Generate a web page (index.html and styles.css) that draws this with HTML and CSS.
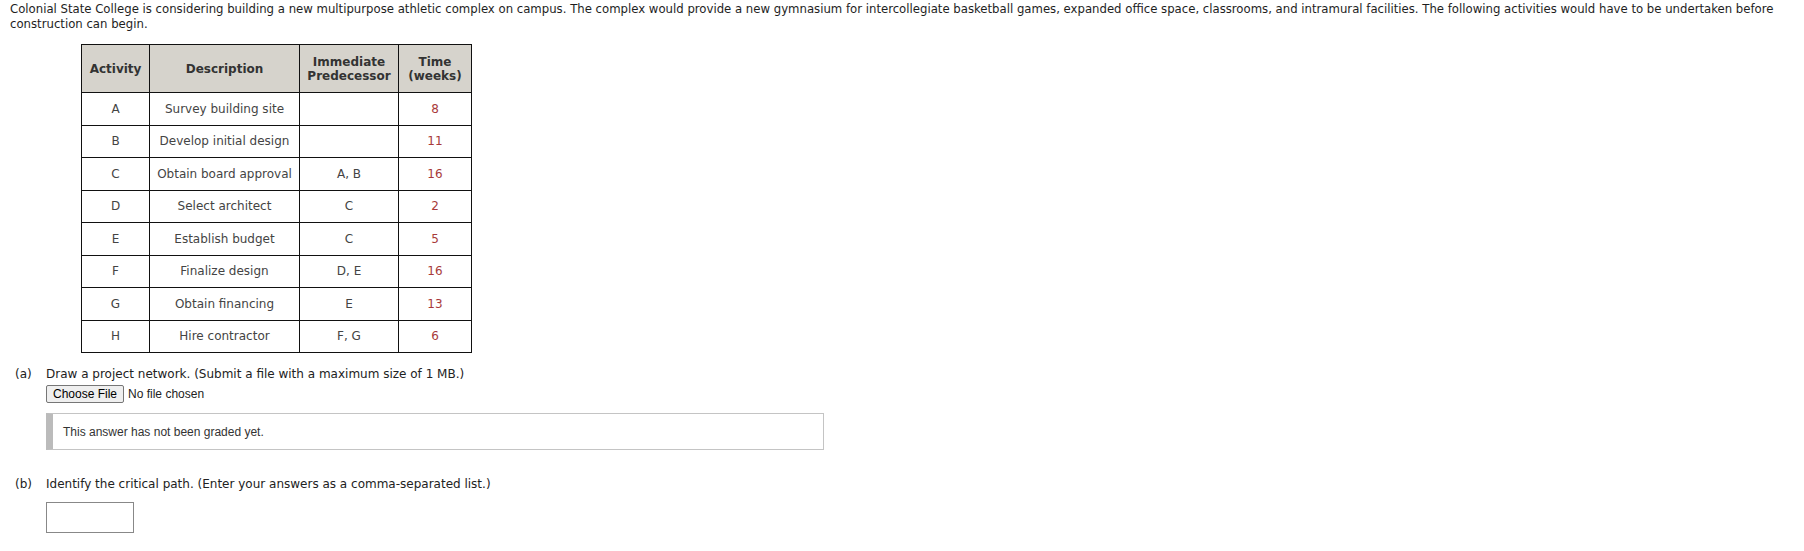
FILE: index.html
```html
<!DOCTYPE html>
<html lang="en">
<head>
    <meta charset="UTF-8">
    <title>Critical Path Question</title>
    <link rel="stylesheet" href="styles.css">
</head>
<body>
    <p class="intro">Colonial State College is considering building a new multipurpose athletic complex on campus. The complex would provide a new gymnasium for intercollegiate basketball games, expanded office space, classrooms, and intramural facilities. The following activities would have to be undertaken before construction can begin.</p>

    <!-- Activity table -->
    <table class="activities">
        <tr>
            <th class="col-act">Activity</th>
            <th class="col-desc">Description</th>
            <th class="col-pred">Immediate<br>Predecessor</th>
            <th class="col-time">Time<br>(weeks)</th>
        </tr>
        <tr><td>A</td><td>Survey building site</td><td></td><td class="time">8</td></tr>
        <tr><td>B</td><td>Develop initial design</td><td></td><td class="time">11</td></tr>
        <tr><td>C</td><td>Obtain board approval</td><td>A, B</td><td class="time">16</td></tr>
        <tr><td>D</td><td>Select architect</td><td>C</td><td class="time">2</td></tr>
        <tr><td>E</td><td>Establish budget</td><td>C</td><td class="time">5</td></tr>
        <tr><td>F</td><td>Finalize design</td><td>D, E</td><td class="time">16</td></tr>
        <tr><td>G</td><td>Obtain financing</td><td>E</td><td class="time">13</td></tr>
        <tr><td>H</td><td>Hire contractor</td><td>F, G</td><td class="time">6</td></tr>
    </table>

    <!-- Part (a) -->
    <div class="part part-a">
        <span class="part-label">(a)</span>
        <div class="part-body">
            <p class="question">Draw a project network. (Submit a file with a maximum size of 1 MB.)</p>
            <div class="file-row">
                <button type="button" class="file-btn">Choose File</button>
                <span class="file-name">No file chosen</span>
            </div>
            <div class="graded">This answer has not been graded yet.</div>
        </div>
    </div>

    <!-- Part (b) -->
    <div class="part part-b">
        <span class="part-label">(b)</span>
        <div class="part-body">
            <p class="question">Identify the critical path. (Enter your answers as a comma-separated list.)</p>
            <input type="text" class="answer">
        </div>
    </div>
</body>
</html>
```

FILE: styles.css
```css
/* General body styling */
body {
    margin: 0;
    padding: 0 10px;
    background-color: #fff;
    color: #222;
    font-family: "DejaVu Sans", Verdana, sans-serif;
    font-size: 12px;
}

/* Intro paragraph */
.intro {
    margin: 1px 0 0 0;
    font-family: "DejaVu Sans Condensed", "DejaVu Sans", sans-serif;
    font-size: 13px;
    line-height: 15px;
    color: #1e1e1e;
}

/* Activity table */
.activities {
    border-collapse: collapse;
    margin: 13px 0 0 71px;
    color: #444;
}

.activities th,
.activities td {
    border: 1px solid #111;
    text-align: center;
    padding: 0;
}

.activities th {
    background-color: #d6d3cc;
    color: #333;
    font-weight: bold;
    height: 47px;
    line-height: 14px;
}

.activities td {
    height: 31.5px;
}

.col-act { width: 67px; }
.col-desc { width: 149px; }
.col-pred { width: 98px; }
.col-time { width: 72px; }

.activities .time {
    color: #a83a3a;
}

/* Question parts */
.part {
    display: flex;
    color: #222;
}

.part-a {
    margin-top: 14px;
}

.part-b {
    margin-top: 27px;
}

.part-label {
    width: 36px;
    padding-left: 5px;
    box-sizing: border-box;
    line-height: 14px;
    flex-shrink: 0;
}

.question {
    margin: 0;
    line-height: 14px;
}

.file-row {
    display: flex;
    align-items: center;
    margin-top: 4px;
    font-family: "Liberation Sans", Arial, sans-serif;
    font-size: 12px;
}

.file-btn {
    font-family: "Liberation Sans", Arial, sans-serif;
    font-size: 12px;
    color: #000;
    background-color: #efefef;
    border: 1px solid #767676;
    border-radius: 2px;
    padding: 0 6px;
    height: 18px;
}

.file-name {
    margin-left: 4px;
    color: #222;
}

.graded {
    margin-top: 10px;
    width: 778px;
    height: 37px;
    box-sizing: border-box;
    border: 1px solid #c4c4c4;
    border-left: 7px solid #bbb;
    padding-left: 10px;
    display: flex;
    align-items: center;
    font-family: "Liberation Sans", Arial, sans-serif;
    font-size: 12px;
    color: #333;
}

.answer {
    display: block;
    margin-top: 11px;
    width: 88px;
    height: 31px;
    box-sizing: border-box;
    border: 1px solid #888;
    padding: 0 3px;
}
```
